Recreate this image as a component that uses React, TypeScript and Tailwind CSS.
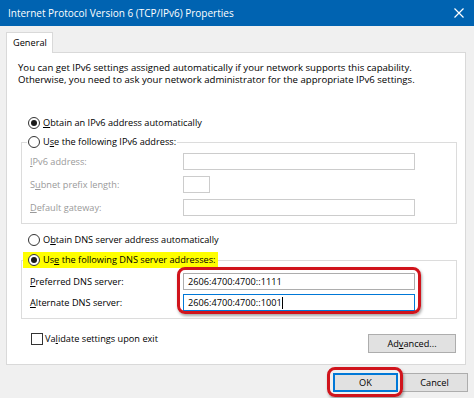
import type { ReactNode } from 'react';

const Radio = ({ checked }: { checked?: boolean }) => (
  <span className="w-[12px] h-[12px] rounded-full border border-[#333333] bg-white flex items-center justify-center shrink-0">
    {checked && <span className="w-[6px] h-[6px] rounded-full bg-[#1a1a1a]" />}
  </span>
);

const Field = ({ label, width = 'w-[232px]', children }: { label: ReactNode; width?: string; children?: ReactNode }) => (
  <div className="flex items-center h-[17px]">
    <span className="w-[153px] text-[#9a9a9a]">{label}</span>
    <div className={`${width} h-[17px] border border-[#cccccc] bg-white`}>{children}</div>
  </div>
);

export default function App() {
  return (
    <div className="w-[474px] h-[398px] overflow-hidden bg-[#f0f0f0] text-[9.2px] leading-[14px] text-black font-['Open_Sans',sans-serif]">
      {/* title bar */}
      <div className="h-[26px] bg-[#0063b1] flex items-center justify-between pl-[8px] pr-[10px] text-white text-[10px]">
        <span>Internet Protocol Version 6 (TCP/IPv6) Properties</span>
        <svg width="10" height="10" viewBox="0 0 10 10" fill="none" stroke="white" strokeWidth="1.2">
          <path d="M0.5 0.5 L9.5 9.5 M9.5 0.5 L0.5 9.5" />
        </svg>
      </div>

      <div className="pl-[6px] pt-[6px]">
        <div className="relative z-10 -mb-px w-[47px] h-[21px] border border-b-0 border-[#d9d9d9] bg-white flex items-center pl-[6px]">
          General
        </div>

        {/* tab panel */}
        <div className="w-[460px] h-[313px] border border-[#d9d9d9] bg-white">
          <p className="pt-[9px] pl-[11px] text-[9.6px] leading-[12px]">
            You can get IPv6 settings assigned automatically if your network supports this capability.
            <br />
            Otherwise, you need to ask your network administrator for the appropriate IPv6 settings.
          </p>

          <div className="mt-[29px] pl-[21px] h-[16px] flex items-center gap-[3px]">
            <Radio checked />
            <span><u>O</u>btain an IPv6 address automatically</span>
          </div>

          <fieldset className="mt-[3px] ml-[14px] w-[436px] border border-[#dcdcdc]">
            <legend className="ml-[5px] pl-[1px] pr-[1px]">
              <span className="h-[16px] flex items-center gap-[3px]">
                <Radio />
                <span>U<u>s</u>e the following IPv6 address:</span>
              </span>
            </legend>
            <div className="pt-[3px] pb-[7px] pl-[8px] flex flex-col gap-[6px]">
              <Field label={<><u>I</u>Pv6 address:</>} />
              <Field label={<>S<u>u</u>bnet prefix length:</>} width="w-[27px]" />
              <Field label={<><u>D</u>efault gateway:</>} />
            </div>
          </fieldset>

          <div className="mt-[8px] pl-[21px] h-[16px] flex items-center gap-[3px]">
            <Radio />
            <span>O<u>b</u>tain DNS server address automatically</span>
          </div>

          <fieldset className="mt-[4px] ml-[14px] w-[436px] border border-[#dcdcdc]">
            <legend className="ml-[1px] pl-[5px] pr-[3px] bg-[#ffff00]">
              <span className="h-[16px] flex items-center gap-[3px]">
                <Radio checked />
                <span>Us<u>e</u> the following DNS server addresses:</span>
              </span>
            </legend>
            <div className="pt-[5px] pb-[7px] pl-[8px] flex">
              <div className="w-[153px] flex flex-col gap-[4px]">
                <span className="h-[17px] flex items-center"><u>P</u>referred DNS server:</span>
                <span className="h-[17px] flex items-center"><u>A</u>lternate DNS server:</span>
              </div>
              <div className="relative w-[232px] flex flex-col gap-[4px]">
                <div className="h-[17px] border border-[#adadad] bg-white flex items-center pl-[4px]">2606:4700:4700::1111</div>
                <div className="h-[17px] border border-[#0078d7] bg-white flex items-center pl-[4px]">
                  2606:4700:4700::1001
                  <span className="w-px h-[12px] bg-black" />
                </div>
                <div className="absolute -left-[6px] -right-[6px] -top-[6px] -bottom-[3px] border-[3px] border-[#d0141c] rounded-[8px] shadow-[1px_2px_3px_rgba(0,0,0,0.35)]" />
              </div>
            </div>
          </fieldset>

          <div className="mt-[12px] pl-[24px] pr-[9px] flex items-start justify-between">
            <div className="h-[16px] flex items-center gap-[2px]">
              <span className="w-[12px] h-[12px] border border-[#333333] bg-white" />
              <span>Va<u>l</u>idate settings upon exit</span>
            </div>
            <button className="mt-[3px] w-[88px] h-[19px] border border-[#adadad] bg-[#e1e1e1] flex items-center justify-center">
              Ad<u>v</u>anced...
            </button>
          </div>
        </div>
      </div>

      {/* dialog buttons */}
      <div className="mt-[8px] pr-[6px] flex justify-end gap-[3px]">
        <div className="relative">
          <button className="w-[65px] h-[19px] border-2 border-[#0078d7] bg-[#e1e1e1] flex items-center justify-center">OK</button>
          <div className="absolute -left-[6px] -right-[5px] -top-[6px] -bottom-[5px] border-[3px] border-[#d0141c] rounded-[8px] shadow-[1px_2px_3px_rgba(0,0,0,0.35)]" />
        </div>
        <button className="w-[67px] h-[19px] border border-[#adadad] bg-[#e1e1e1] flex items-center justify-center">Cancel</button>
      </div>
    </div>
  );
}
